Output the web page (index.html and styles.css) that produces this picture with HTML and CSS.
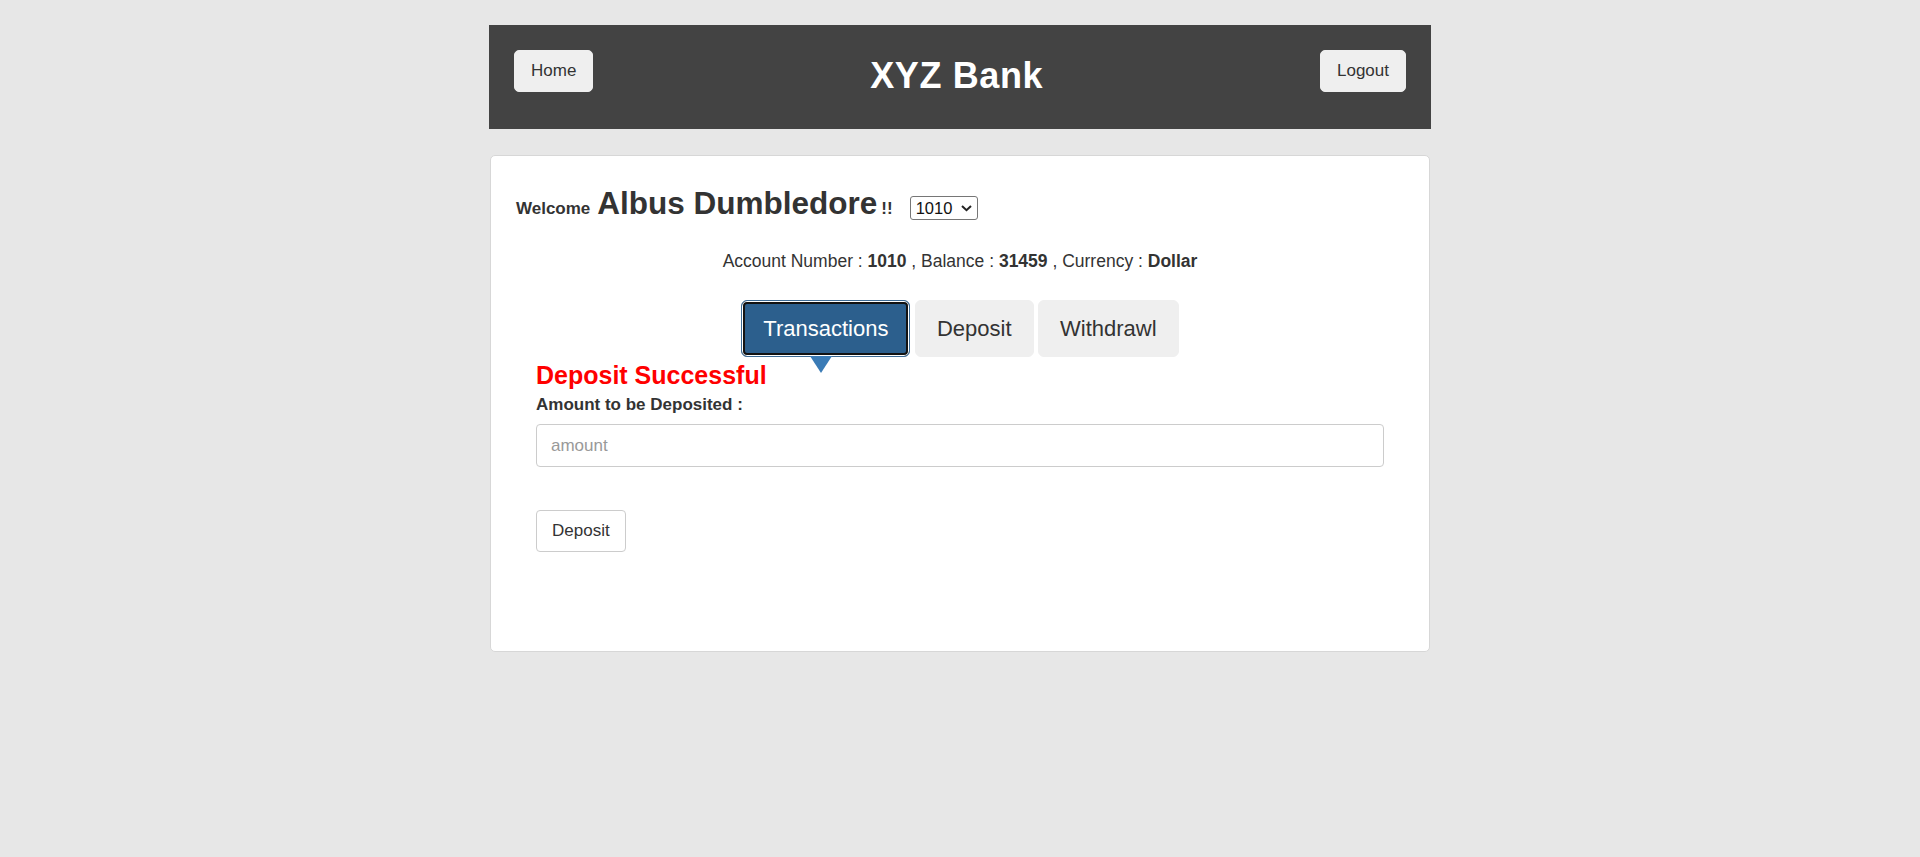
FILE: index.html
```html
<!DOCTYPE html>
<html lang="en">
<head>
<meta charset="utf-8">
<title>XYZ Bank</title>
<link rel="stylesheet" href="styles.css">
</head>
<body>
<div class="page">
  <header class="topbar">
    <button class="nav-btn" type="button">Home</button>
    <h1 class="brand">XYZ Bank</h1>
    <button class="nav-btn" type="button">Logout</button>
  </header>
  <main class="card">
    <div class="welcome">
      <span class="welcome-label">Welcome</span>
      <span class="welcome-name">Albus Dumbledore</span>
      <span class="welcome-bang">!!</span>
      <span class="select-wrap">
        <select class="acct-select"><option>1010</option></select>
        <svg class="chev" width="11" height="7" viewBox="0 0 11 7"><path d="M1 1 L5.5 5.2 L10 1" fill="none" stroke="#222" stroke-width="2"/></svg>
      </span>
    </div>
    <p class="acct-info">Account Number : <strong>1010</strong> , Balance : <strong>31459</strong> , Currency : <strong>Dollar</strong></p>
    <nav class="tabs">
      <button class="tab tab-active" type="button">Transactions<span class="tab-arrow"></span></button>
      <button class="tab" type="button">Deposit</button>
      <button class="tab" type="button">Withdrawl</button>
    </nav>
    <form class="deposit-form">
      <h4 class="msg-success">Deposit Successful</h4>
      <label class="field-label">Amount to be Deposited :</label>
      <input class="amount-input" type="number" placeholder="amount">
      <button class="submit-btn" type="button">Deposit</button>
    </form>
  </main>
</div>
</body>
</html>
```
FILE: styles.css
```css
* { box-sizing: border-box; }

html, body {
  margin: 0;
  padding: 0;
  background: #e7e7e7;
  font-family: "Liberation Sans", Arial, Helvetica, sans-serif;
  color: #333;
}

.page {
  padding-top: 25px;
  display: flex;
  flex-direction: column;
  align-items: center;
}

.topbar {
  width: 942px;
  height: 104px;
  background: #434343;
  padding: 25px 25px 0;
  display: flex;
  justify-content: space-between;
  align-items: flex-start;
}

.nav-btn {
  font-family: "Liberation Sans", Arial, sans-serif;
  font-size: 17px;
  line-height: 24px;
  padding: 8px 16px;
  border: 1px solid #efefef;
  border-radius: 5px;
  background: #efefef;
  color: #333;
  cursor: pointer;
}

.brand {
  margin: 0;
  padding-top: 5px;
  font-size: 36px;
  line-height: 42px;
  letter-spacing: 0.6px;
  font-weight: bold;
  color: #fff;
}

.card {
  width: 940px;
  margin-top: 26px;
  background: #fff;
  border: 1px solid #d7d7d7;
  border-radius: 5px;
  padding: 25px;
}

.welcome {
  display: flex;
  align-items: baseline;
  margin-top: 4px;
  height: 36px;
}

.welcome-label {
  font-size: 17px;
  font-weight: bold;
  line-height: normal;
}

.welcome-name {
  font-size: 31.5px;
  font-weight: bold;
  line-height: 36px;
  margin-left: 7px;
}

.welcome-bang {
  font-size: 17px;
  font-weight: bold;
  line-height: normal;
  margin-left: 4px;
}

.select-wrap {
  position: relative;
  margin-left: 17px;
}

.acct-select {
  -webkit-appearance: none;
  appearance: none;
  width: 68px;
  height: 24px;
  padding: 0 0 0 5px;
  border: 1px solid #767676;
  border-radius: 3px;
  background: #fff;
  color: #111;
  font-family: "Liberation Sans", Arial, sans-serif;
  font-size: 16.5px;
}

.chev {
  position: absolute;
  right: 6px;
  top: 9px;
  pointer-events: none;
}

.acct-info {
  margin: 28px 0 0;
  text-align: center;
  font-size: 17.5px;
  line-height: 25px;
}

.acct-info strong { font-weight: bold; }

.tabs {
  margin-top: 26px;
  display: flex;
  justify-content: center;
  gap: 4.5px;
}

.tab {
  position: relative;
  font-family: "Liberation Sans", Arial, sans-serif;
  font-size: 22px;
  line-height: 31px;
  padding: 12px 21px;
  border: 1px solid #efefef;
  border-radius: 6px;
  background: #efefef;
  color: #333;
  cursor: pointer;
}

.tab-active {
  background: #2c5f8d;
  color: #fff;
  border-color: #3d6b95;
  box-shadow: inset 0 0 0 1px #fff, inset 0 0 0 3px #121212;
}

.tab-arrow {
  position: absolute;
  left: 68px;
  top: 100%;
  width: 0;
  height: 0;
  border-left: 11px solid transparent;
  border-right: 11px solid transparent;
  border-top: 17px solid #3a7bb6;
}

.deposit-form {
  margin: 3px 20px 0;
  padding-bottom: 74px;
  display: flex;
  flex-direction: column;
  align-items: flex-start;
}

.msg-success {
  margin: 0;
  font-size: 25px;
  line-height: 30px;
  font-weight: bold;
  color: #ff0000;
}

.field-label {
  margin-top: 3px;
  font-size: 17px;
  line-height: 24px;
  font-weight: bold;
  color: #333;
}

.amount-input {
  margin-top: 7px;
  width: 100%;
  height: 43px;
  padding: 0 14px;
  border: 1px solid #ccc;
  border-radius: 4px;
  font-family: "Liberation Sans", Arial, sans-serif;
  font-size: 17px;
  color: #555;
  background: #fff;
}

.amount-input::placeholder { color: #999; }

.submit-btn {
  margin-top: 43px;
  height: 42px;
  padding: 0 15px;
  border: 1px solid #ccc;
  border-radius: 4px;
  background: #fff;
  color: #333;
  font-family: "Liberation Sans", Arial, sans-serif;
  font-size: 17px;
  cursor: pointer;
}
```
